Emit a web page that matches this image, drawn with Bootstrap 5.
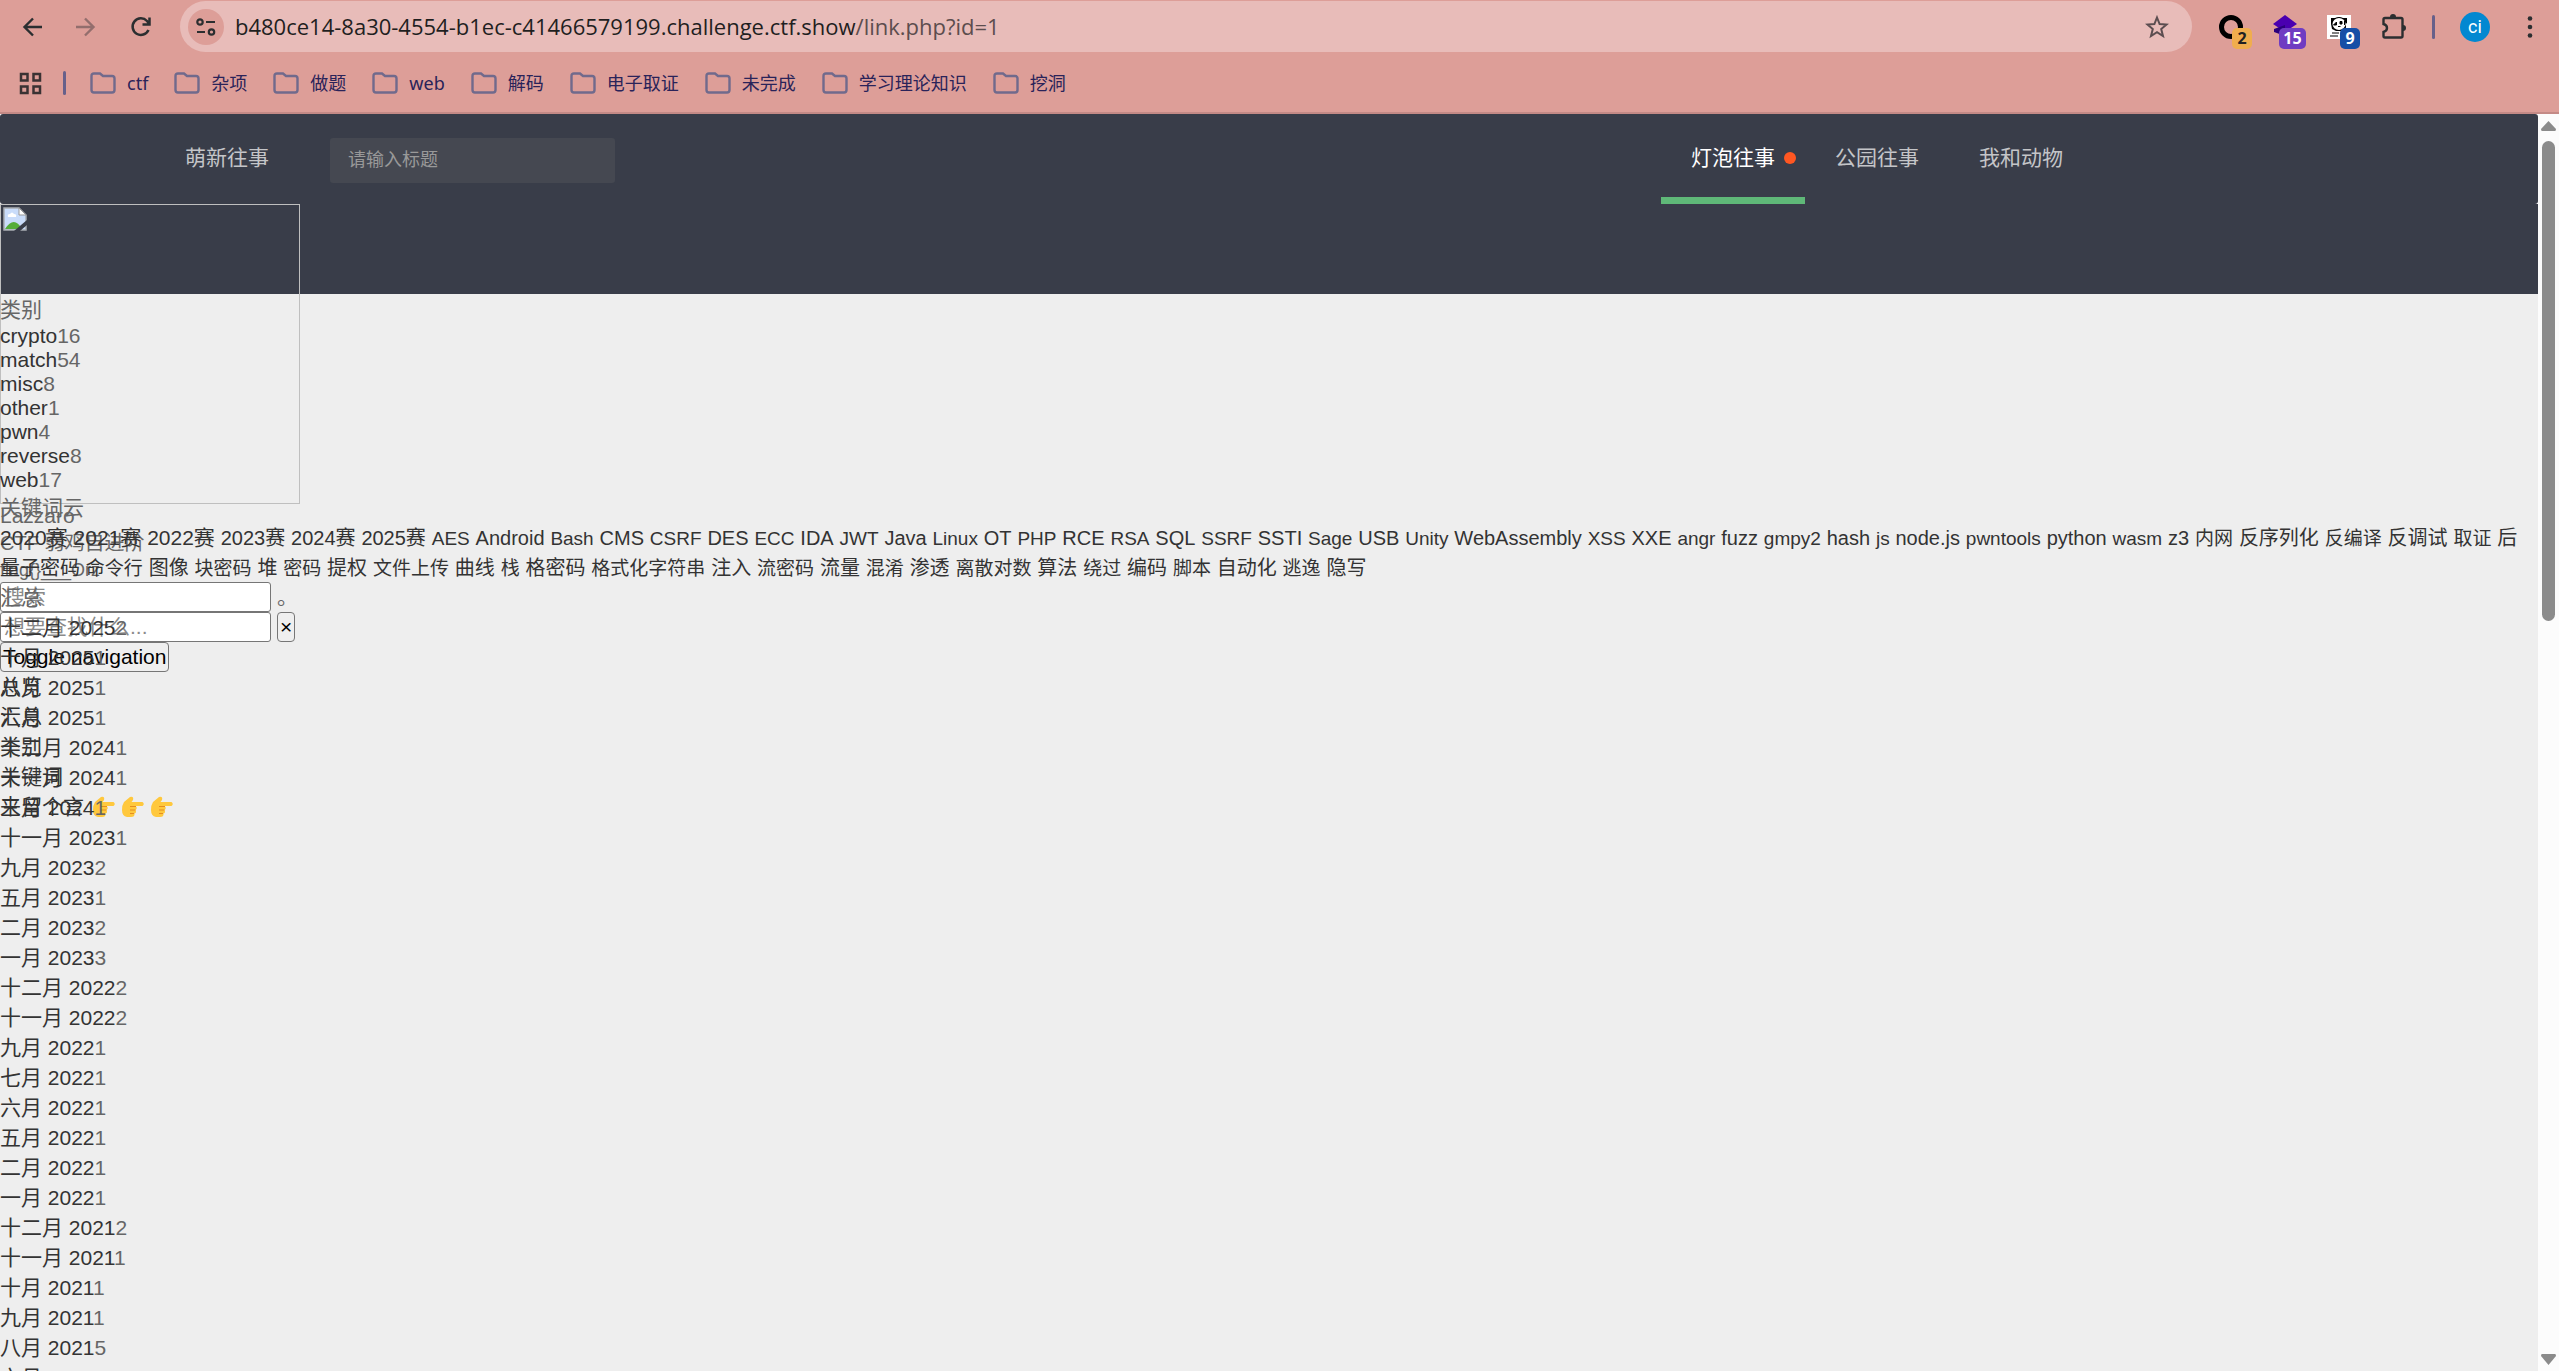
<!DOCTYPE html>
<html lang="zh-CN">
<head>
<meta charset="utf-8">
<meta name="viewport" content="width=device-width, initial-scale=1">
<title>萌新往事</title>
<link href="https://cdn.jsdelivr.net/npm/bootstrap@5.3.0/dist/css/bootstrap.min.css" rel="stylesheet">
<style>
body{font:21px/30px "Liberation Sans","Noto Sans CJK SC",sans-serif;color:#666;background:#dd9e98}
a{color:#333;text-decoration:none}
ul{list-style:none;margin:0;padding:0}
svg{display:block;flex:none}
/* browser frame */
.chrome-ui{height:114px;border-bottom:2px solid #c48a86;font-family:"Noto Sans","Noto Sans CJK SC",sans-serif;color:#2b2e30}
.toolrow{height:54px;padding:1px 22px 2px 21px}
.icon-btn{border:0;background:none;padding:0;color:#2b2e30}
.icon-btn.dim{color:#936e6d}
.omnibox{height:51px;border-radius:26px;background:#e8bcb9;margin:0 27px 0 27px;padding:0 23px 0 8px}
.site-info{width:36px;height:36px;border-radius:50%;background:#dd9e98;display:grid;place-items:center}
.url-box{font-family:"Open Sans","Noto Sans",sans-serif;font-size:22px;line-height:30px;color:#1f1f1f;margin-left:11px;padding-bottom:2px}
.url-box span{color:#5c4d4e}
.exts{gap:30px}
.ext{position:relative;width:24px;height:24px}
.ext b{position:absolute;left:13px;top:13px;width:20px;height:21px;border-radius:5px;font:700 16px/21px "Open Sans",sans-serif;text-align:center;color:#fff}
.ext .amber{background:#f0ad4e;color:#222}
.ext .violet{left:6px;width:27px;background:#6f3cc2}
.ext .navy{background:#174ea6}
.vbar{width:3px;height:24px;background:#67608a;border-radius:2px}
.avatar-dot{width:30px;height:30px;border-radius:50%;background:#0288d1;color:#fff;font:18px/30px Roboto,sans-serif;text-align:center}
.tail{gap:25px;margin-left:25px}
.bookrow{height:58px;padding-left:19px}
.bookrow .vbar{margin:0 24px 0 21px}
.bookmarks{gap:26px}
.bookrow a{color:#2a2359;font-size:18px;line-height:24px;gap:11px}
/* page */
.viewport{height:calc(100vh - 114px);background:#fff}
.pagebody{background:#eee;min-width:0}
.topnav{height:90px;background:#393d49;border-radius:3px;padding:0 445px 0 155px}
.topnav a{color:#c4c5c8;display:block;line-height:88px;height:90px;padding:0 30px;position:relative}
.topnav a.current{color:#fff}
.topnav a.current::after{content:"";position:absolute;left:0;right:0;bottom:0;height:7px;background:#5fb878}
.reddot{position:absolute;right:9px;top:38px;width:12px;height:12px;border-radius:50%;background:#ff5722}
.title-search{width:285px;height:45px;margin:3px 0 0 31px;border:0;border-radius:3px;background:#454851;padding:0 18px;font-size:18px;color:#ccc}
.title-search::placeholder{color:#999;opacity:1}
.subband{height:90px;background:#393d49}
.stack{position:relative}
.cats{margin:-1px 0 1px}
.cats li{line-height:24px}
.sidebox{position:absolute;left:0;top:0}
.portrait{width:300px;height:300px;border:1px solid #bfbfbf;padding:2px}
.nick{line-height:24px}
.motto{font-size:20px}
.flagline{font-size:18px;line-height:24px}
.fieldrow{gap:6px}
.fld{display:block;width:271px;height:30px;border:1px solid #767676;border-radius:3px;background:#fff;padding:0 3px;font-size:21px;line-height:28px}
.fld::placeholder{color:#8a8a8a;opacity:1}
.plainbtn{height:30px;border:1px solid #767676;border-radius:4px;background:#efefef;color:#000;padding:0 2px;line-height:26px;font-size:21px}
.hands{gap:5px}
.front{position:relative;z-index:1;pointer-events:none;padding-top:1px}
.front a{pointer-events:auto}
.cloud{padding-right:16px}
.cloud a{line-height:1}
.lv2{font-size:20px}.lv1{font-size:19px}
.scroller{flex:none;width:21px;background:#fcfcfc;padding:7px 0 6px}
.thumb{width:13px;height:480px;border-radius:7px;background:#8b8b8b;margin-top:10px}
</style>
<script src="https://cdn.jsdelivr.net/npm/bootstrap@5.3.0/dist/js/bootstrap.bundle.min.js"></script>
</head>
<body class="overflow-hidden">
<svg width="0" height="0" class="position-absolute"><defs>
<symbol id="folder" viewBox="0 0 26 22"><path d="M1.500 4V18Q1.500 20.500 4 20.500H22Q24.500 20.500 24.500 18V6.500Q24.500 4 22 4H13L10 1.500H4Q1.500 1.500 1.500 4Z" fill="none" stroke="#706a8c" stroke-width="2.400"/></symbol>
<symbol id="hand" viewBox="0 0 24 22"><path d="M3 6 9 1Q13 0 12 4L10.500 6H21.500Q24 8 21.500 10H14.500Q17 12 14.500 14Q16 16.500 13.500 17.500Q14 21 10 21H6Q1 20 1 14 1 9 3 6Z" fill="#ffc83d"/><path d="M9 10.500H15M9 14H14.500M9 17.500H13" stroke="#e58e20" stroke-width="1.200"/></symbol>
</defs></svg>

<header class="chrome-ui">
  <div class="toolrow d-flex align-items-center">
    <button class="icon-btn" aria-label="后退"><svg width="24" height="24" viewBox="0 0 24 24" fill="none" stroke="currentColor" stroke-width="2.400"><path d="M21 12H4M12 3.500 3.500 12 12 20.500"/></svg></button>
    <button class="icon-btn dim ms-4 ps-1" aria-label="前进"><svg width="24" height="24" viewBox="0 0 24 24" fill="none" stroke="currentColor" stroke-width="2.400"><path d="M3 12H20M12 3.500 20.500 12 12 20.500"/></svg></button>
    <button class="icon-btn ms-4 ps-2" aria-label="重新加载"><svg width="24" height="24" viewBox="0 0 24 24" fill="none" stroke="currentColor" stroke-width="2.500"><path d="M19.500 15A8.300 8.300 0 1 1 18 6L20 8.500M20.500 2.500V9.500H13.500"/></svg></button>
    <div class="omnibox flex-grow-1 d-flex align-items-center">
      <div class="site-info"><svg width="20" height="20" viewBox="0 0 20 20" fill="none" stroke="#2b2e30" stroke-width="2.200"><circle cx="4" cy="5" r="2.700"/><path d="M10 5H19M1 15H9"/><circle cx="15.500" cy="15" r="2.700"/></svg></div>
      <div class="url-box flex-grow-1">b480ce14-8a30-4554-b1ec-c41466579199.challenge.ctf.show<span>/link.php?id=1</span></div>
      <button class="icon-btn" aria-label="收藏"><svg width="24" height="24" viewBox="0 0 24 24" fill="none" stroke="#5b4d50" stroke-width="2"><path d="M12 2.500 14.600 9 21.500 9.500 16.200 14 18 21 12 17.200 6 21 7.800 14 2.500 9.500 9.400 9Z"/></svg></button>
    </div>
    <div class="exts d-flex align-items-center">
      <div class="ext"><svg width="24" height="24" viewBox="0 0 24 24"><circle cx="12" cy="12" r="9.500" fill="none" stroke="#000" stroke-width="5"/></svg><b class="amber">2</b></div>
      <div class="ext"><svg width="26" height="24" viewBox="0 0 26 24"><path d="M12 0 24 9 12 17 0 9Z" fill="#4a00b0"/><path d="M1 14 12 10V21L1 17Z" fill="#2b007c"/></svg><b class="violet">15</b></div>
      <div class="ext"><svg width="24" height="24" viewBox="0 0 24 24"><path fill="#fff" d="M0 0H24V24H0Z"/><path d="M4 3H8Q12 1 16 3H20V8L18.500 9Q20 12 18 15L15 16H9L5 14 4 9Z"/><ellipse cx="12" cy="9" rx="6.500" ry="6" fill="#fff"/><path d="M6.500 10 9.500 7V10ZM13 6.500H15V9H13ZM17.500 6V10M11 11.500H13.500M5 18H12M3 21H11" stroke="#000"/></svg><b class="navy">9</b></div>
      <button class="icon-btn" aria-label="扩展程序"><svg width="26" height="26" viewBox="0 0 26 26"><path d="M4 4H20Q21.500 4 21.500 5.500V22Q21.500 23.500 20 23.500H4Q2.500 23.500 2.500 22V18Q6 17 6 14T2.500 10V5.500Q2.500 4 4 4Z" fill="none" stroke="#2b2e30" stroke-width="2.400"/><path d="M9 3A3 3 0 0 1 15 3ZM22 11A3 3 0 0 1 22 17Z" fill="#2b2e30"/></svg></button>
    </div>
    <div class="tail d-flex align-items-center">
      <div class="vbar"></div>
      <div class="avatar-dot">ci</div>
      <button class="icon-btn ps-2" aria-label="菜单"><svg width="14" height="24" viewBox="0 0 14 24" fill="#2b2e30"><circle cx="7" cy="3.500" r="2.300"/><circle cx="7" cy="12" r="2.300"/><circle cx="7" cy="20.500" r="2.300"/></svg></button>
    </div>
  </div>
  <nav class="bookrow d-flex align-items-center">
    <svg width="23" height="23" viewBox="0 0 23 23" fill="none" stroke="#3a3233" stroke-width="2.500"><path d="M2 2H8.500V8.500H2ZM14.500 2H21V8.500H14.500ZM2 14.500H8.500V21H2ZM14.500 14.500H21V21H14.500Z"/></svg>
    <div class="vbar"></div>
    <div class="bookmarks d-flex" id="bookmarks"></div>
  </nav>
</header>

<div class="viewport d-flex overflow-hidden">
  <main class="pagebody flex-grow-1">
    <div class="bg-white"><nav class="topnav d-flex align-items-center">
      <a href="#">萌新往事</a>
      <input class="title-search" type="text" placeholder="请输入标题" aria-label="标题">
      <div class="d-flex ms-auto"><a href="#" class="current">灯泡往事<span class="reddot"></span></a><a href="#">公园往事</a><a href="#">我和动物</a></div>
    </nav></div>
    <div class="stack">
      <aside class="sidebox">
        <div class="portrait"><svg width="24" height="24" viewBox="0 0 24 24"><path d="M1 1H16L23 8V23H1Z" fill="#c9dcfa" stroke="#a9adb3" stroke-width="1.500"/><path d="M16 1V8H23Z" fill="#fff" stroke="#999"/><path d="M5 10Q4 7 7 7 9 4 11 7 14 7 13 10Z" fill="#fff"/><path d="M2 22Q11 8 19 22Z" fill="#55ad3a"/><path d="M11 24 24 13V18L17 24Z" fill="#393d49"/></svg></div>
        <div class="nick">Lazzaro</div>
        <div class="motto">CTF 弱鸡自进阶</div>
        <div class="flagline">flag{}___Orz</div>
        <div class="fieldrow d-flex"><input class="fld" type="text" placeholder="搜索" aria-label="搜索"><span>。</span></div>
        <div class="fieldrow d-flex"><input class="fld" type="text" placeholder="想要查找什么..." aria-label="查找"><button class="plainbtn">×</button></div>
        <button class="plainbtn d-block">Toggle navigation</button>
        <ul><li><a href="#">总览</a></li><li><a href="#">汇总</a></li><li><a href="#">类别</a></li><li><a href="#">关键词</a></li><li class="d-flex align-items-center"><a href="#">来留个言</a><span class="hands d-flex ms-2"><svg width="24" height="22"><use href="#hand"/></svg><svg width="24" height="22"><use href="#hand"/></svg><svg width="24" height="22"><use href="#hand"/></svg></span></li></ul>
      </aside>
      <div class="subband"></div>
      <div class="front">
        <div>类别</div>
        <ul class="cats" id="cats"></ul>
        <div>关键词云</div>
        <div class="cloud" id="tags"></div>
        <div>汇总</div>
        <ul id="months"></ul>
      </div>
    </div>
  </main>
  <div class="scroller d-flex flex-column align-items-center" aria-hidden="true">
    <svg width="15" height="10" viewBox="0 0 15 10"><path d="M7.500 0 15 8Q15 10 14 10H1Q0 10 0 8Z" fill="#8b8b8b"/></svg>
    <div class="thumb"></div>
    <svg class="mt-auto" width="15" height="11" viewBox="0 0 15 11"><path d="M7.500 11 15 2Q15 0 14 0H1Q0 0 0 2Z" fill="#8b8b8b"/></svg>
  </div>
</div>
<script>
const fill=(id,items,fn,sep='')=>document.getElementById(id).innerHTML=items.split(' ').map(fn).join(sep);
fill('bookmarks','ctf 杂项 做题 web 解码 电子取证 未完成 学习理论知识 挖洞',t=>`<a href="#" class="d-flex align-items-center"><svg width="26" height="22"><use href="#folder"/></svg>${t}</a>`);
const counted=t=>{const [a,n]=t.split(':');return `<li><a href="#">${a.replace('_',' ')}</a>${n}</li>`};
fill('cats','crypto:16 match:54 misc:8 other:1 pwn:4 reverse:8 web:17',counted);
// tag cloud: the first tags are the largest, the rest share two smaller levels
const level=i=>i<3?3:i<6?2:1+i%2;
fill('tags','2020赛 2021赛 2022赛 2023赛 2024赛 2025赛 AES Android Bash CMS CSRF DES ECC IDA JWT Java Linux OT PHP RCE RSA SQL SSRF SSTI Sage USB Unity WebAssembly XSS XXE angr fuzz gmpy2 hash js node.js pwntools python wasm z3 内网 反序列化 反编译 反调试 取证 后量子密码 命令行 图像 块密码 堆 密码 提权 文件上传 曲线 栈 格密码 格式化字符串 注入 流密码 流量 混淆 渗透 离散对数 算法 绕过 编码 脚本 自动化 逃逸 隐写',(t,i)=>`<a href="#" class="lv${level(i)}">${t}</a>`,' ');
fill('months','十二月_2025:2 十月_2025:1 八月_2025:1 六月_2025:1 十二月_2024:1 十一月_2024:1 三月_2024:1 十一月_2023:1 九月_2023:2 五月_2023:1 二月_2023:2 一月_2023:3 十二月_2022:2 十一月_2022:2 九月_2022:1 七月_2022:1 六月_2022:1 五月_2022:1 二月_2022:1 一月_2022:1 十二月_2021:2 十一月_2021:1 十月_2021:1 九月_2021:1 八月_2021:5 六月_2021:1',counted);
</script>
</body>
</html>
